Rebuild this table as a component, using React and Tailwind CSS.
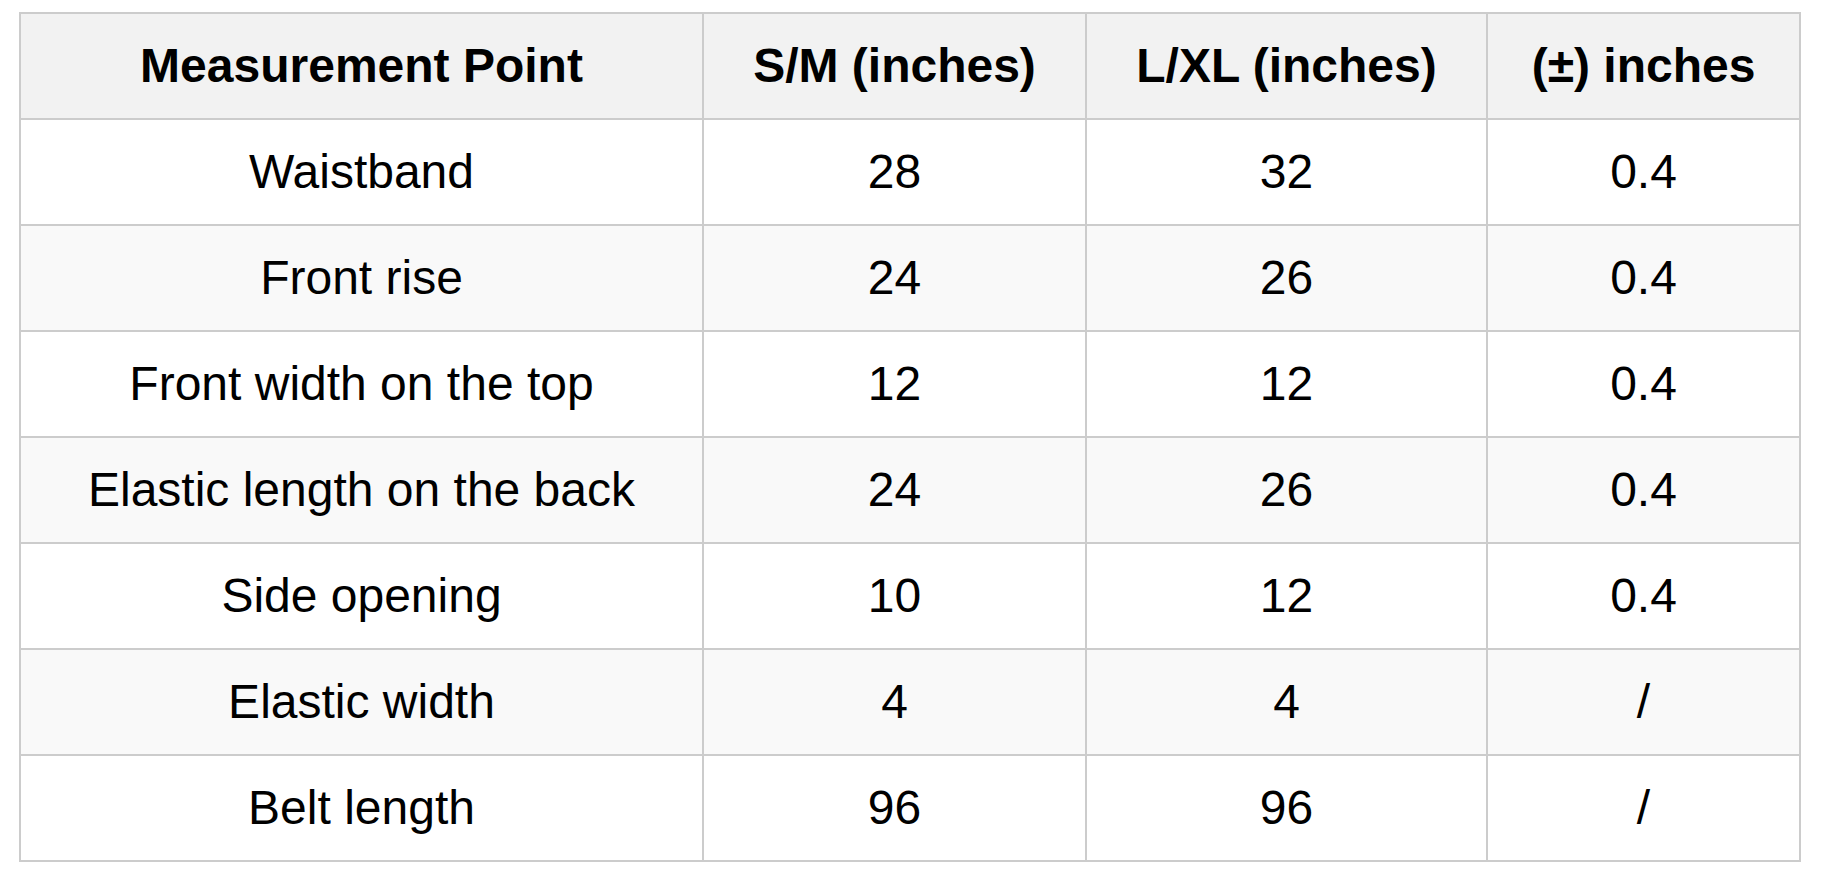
const headers = ["Measurement Point", "S/M (inches)", "L/XL (inches)", "(±) inches"]

const rows = [
  ["Waistband", "28", "32", "0.4"],
  ["Front rise", "24", "26", "0.4"],
  ["Front width on the top", "12", "12", "0.4"],
  ["Elastic length on the back", "24", "26", "0.4"],
  ["Side opening", "10", "12", "0.4"],
  ["Elastic width", "4", "4", "/"],
  ["Belt length", "96", "96", "/"],
]

export default function App() {
  return (
    <div className="min-h-screen w-full bg-white pt-[12px] pl-[19px] font-['Liberation_Sans',Arial,sans-serif] text-black">
      <div className="grid w-[1782px] grid-cols-[683px_383px_401px_313px] border-l-2 border-t-2 border-[#cccccc]">
        {headers.map((h) => (
          <div
            key={h}
            className="flex h-[106px] items-center justify-center border-b-2 border-r-2 border-[#cccccc] bg-[#f2f2f2] text-[48px] font-bold leading-[1.15]"
          >
            {h}
          </div>
        ))}
        {rows.map((row, i) =>
          row.map((cell, j) => (
            <div
              key={i + "-" + j}
              className={
                "flex h-[106px] items-center justify-center border-b-2 border-r-2 border-[#cccccc] text-[48px] leading-[1.15] " +
                (i % 2 === 1 ? "bg-[#f9f9f9]" : "bg-white")
              }
            >
              {cell}
            </div>
          ))
        )}
      </div>
    </div>
  )
}
